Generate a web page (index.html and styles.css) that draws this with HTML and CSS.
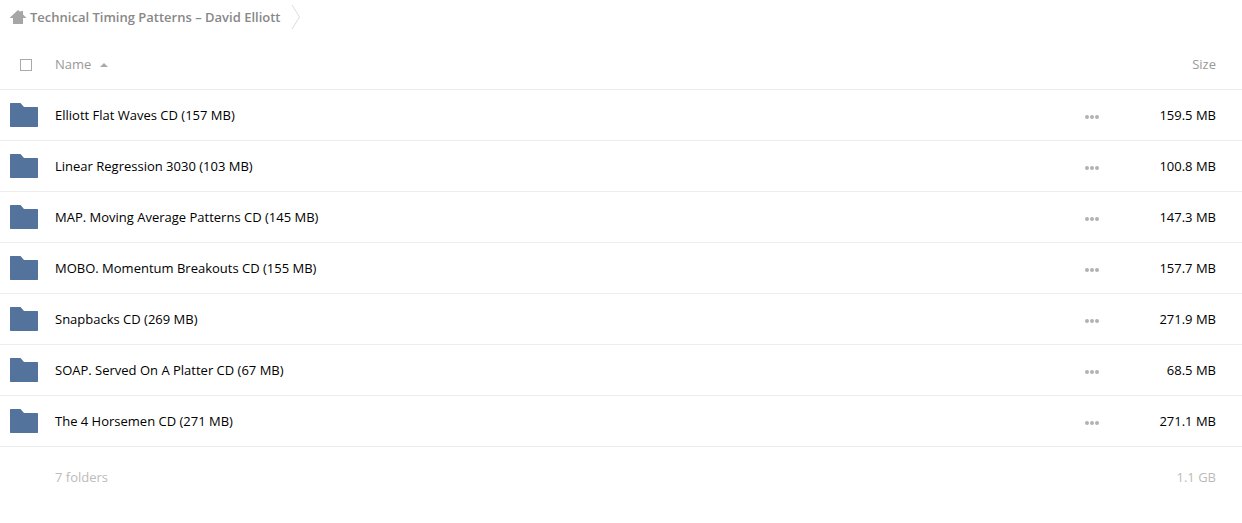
FILE: index.html
```html
<!DOCTYPE html>
<html lang="en">
<head>
    <meta charset="UTF-8">
    <meta name="viewport" content="width=device-width, initial-scale=1.0">
    <title>Technical Timing Patterns – David Elliott</title>
    <link rel="stylesheet" href="styles.css">
</head>
<body>

<!-- shared icons -->
<svg class="sprite" aria-hidden="true">
    <symbol id="folder" viewBox="0 0 28 24">
        <path d="M.5 0H10.500l3.500 4h13.500l.5.5v19l-.5.5H.5l-.5-.5V.5z"/>
    </symbol>
    <symbol id="dots" viewBox="0 0 14 4">
        <circle cx="2" cy="2" r="2"/>
        <circle cx="7" cy="2" r="2"/>
        <circle cx="12" cy="2" r="2"/>
    </symbol>
</svg>

<nav class="breadcrumb" aria-label="Breadcrumb">
    <a class="crumb" href="#">
        <svg class="home" viewBox="0 0 16 14" aria-hidden="true">
            <path d="M8 0l2.500 2V1H13v3.500L16 7.500V8h-3v6H3V8H0v-.5z"/>
        </svg>
        <span>Technical Timing Patterns – David Elliott</span>
    </a>
    <svg class="separator" viewBox="0 0 10 26" aria-hidden="true">
        <path d="M1 1l7.500 12L1 25"/>
    </svg>
</nav>

<table class="files">
    <thead>
        <tr>
            <th class="icon-cell"><input class="select-all" type="checkbox" aria-label="Select all"></th>
            <th class="name"><button class="sort" type="button">Name <span class="arrow"></span></button></th>
            <th class="actions"></th>
            <th class="size"><button class="sort" type="button">Size</button></th>
        </tr>
    </thead>
    <tbody>
        <tr>
            <td class="icon-cell"><svg class="folder"><use href="#folder"/></svg></td>
            <td class="name"><a href="#">Elliott Flat Waves CD (157 MB)</a></td>
            <td class="actions"><button class="more" type="button" aria-label="More actions"><svg class="dots"><use href="#dots"/></svg></button></td>
            <td class="size">159.5 MB</td>
        </tr>
        <tr>
            <td class="icon-cell"><svg class="folder"><use href="#folder"/></svg></td>
            <td class="name"><a href="#">Linear Regression 3030 (103 MB)</a></td>
            <td class="actions"><button class="more" type="button" aria-label="More actions"><svg class="dots"><use href="#dots"/></svg></button></td>
            <td class="size">100.8 MB</td>
        </tr>
        <tr>
            <td class="icon-cell"><svg class="folder"><use href="#folder"/></svg></td>
            <td class="name"><a href="#">MAP. Moving Average Patterns CD (145 MB)</a></td>
            <td class="actions"><button class="more" type="button" aria-label="More actions"><svg class="dots"><use href="#dots"/></svg></button></td>
            <td class="size">147.3 MB</td>
        </tr>
        <tr>
            <td class="icon-cell"><svg class="folder"><use href="#folder"/></svg></td>
            <td class="name"><a href="#">MOBO. Momentum Breakouts CD (155 MB)</a></td>
            <td class="actions"><button class="more" type="button" aria-label="More actions"><svg class="dots"><use href="#dots"/></svg></button></td>
            <td class="size">157.7 MB</td>
        </tr>
        <tr>
            <td class="icon-cell"><svg class="folder"><use href="#folder"/></svg></td>
            <td class="name"><a href="#">Snapbacks CD (269 MB)</a></td>
            <td class="actions"><button class="more" type="button" aria-label="More actions"><svg class="dots"><use href="#dots"/></svg></button></td>
            <td class="size">271.9 MB</td>
        </tr>
        <tr>
            <td class="icon-cell"><svg class="folder"><use href="#folder"/></svg></td>
            <td class="name"><a href="#">SOAP. Served On A Platter CD (67 MB)</a></td>
            <td class="actions"><button class="more" type="button" aria-label="More actions"><svg class="dots"><use href="#dots"/></svg></button></td>
            <td class="size">68.5 MB</td>
        </tr>
        <tr>
            <td class="icon-cell"><svg class="folder"><use href="#folder"/></svg></td>
            <td class="name"><a href="#">The 4 Horsemen CD (271 MB)</a></td>
            <td class="actions"><button class="more" type="button" aria-label="More actions"><svg class="dots"><use href="#dots"/></svg></button></td>
            <td class="size">271.1 MB</td>
        </tr>
    </tbody>
    <tfoot>
        <tr>
            <td class="icon-cell"></td>
            <td class="name">7 folders</td>
            <td class="actions"></td>
            <td class="size">1.1 GB</td>
        </tr>
    </tfoot>
</table>

</body>
</html>
```

FILE: styles.css
```css
body {
    margin: 0;
    background-color: #fff;
    color: #000;
    font-family: "Open Sans", "Noto Sans", sans-serif;
    font-size: 13px;
    line-height: 20px;
}

a {
    color: inherit;
    text-decoration: none;
}

button {
    padding: 0;
    border: 0;
    background: none;
    color: inherit;
    font: inherit;
    cursor: pointer;
}

.sprite {
    display: none;
}

.breadcrumb {
    display: flex;
    align-items: center;
    gap: 11px;
    padding: 4px 10px 9px;
}

.crumb {
    display: flex;
    align-items: center;
    gap: 4px;
    color: #888;
    font-weight: 600;
}

.home {
    width: 16px;
    height: 14px;
    fill: #a6a6a6;
}

.separator {
    width: 10px;
    height: 26px;
    fill: none;
    stroke: #ddd;
}

.files {
    width: 100%;
    border-collapse: separate;
    border-spacing: 0;
}

th,
td {
    height: 50px;
    padding: 0;
    border-bottom: 1px solid #ededed;
    text-align: left;
    font-weight: normal;
}

th {
    color: #999;
}

.icon-cell {
    width: 45px;
    padding-left: 10px;
}

.folder {
    display: block;
    width: 28px;
    height: 24px;
    fill: #54739c;
}

.select-all {
    display: block;
    appearance: none;
    width: 12px;
    height: 12px;
    margin: 2px 10px 0;
    border: 1px solid #aaa;
    background-color: #fff;
}

.select-all:checked {
    background-color: #aaa;
}

.arrow {
    display: inline-block;
    margin-left: 5px;
    border: 4px solid transparent;
    border-top: 0;
    border-bottom-color: #aaa;
    vertical-align: 2px;
}

.actions {
    width: 24px;
}

.more {
    display: block;
    padding: 5px 0 2px;
}

.dots {
    display: block;
    width: 14px;
    height: 4px;
    fill: #b2b2b2;
}

.size {
    width: 107px;
    padding-right: 26px;
    text-align: right;
}

tfoot td {
    height: 60px;
    border-bottom: 0;
    color: #bbb;
}
```
